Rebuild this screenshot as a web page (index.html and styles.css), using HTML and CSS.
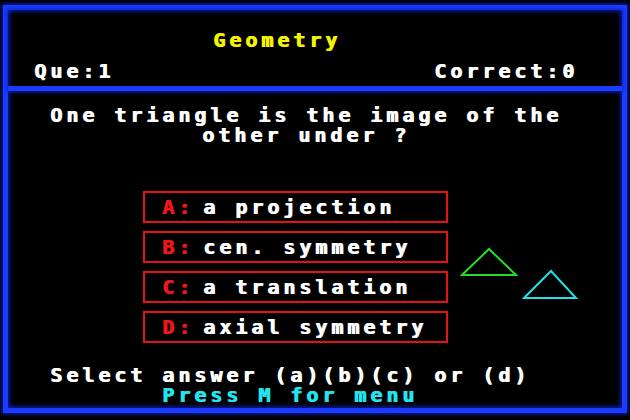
FILE: index.html
```html
<!DOCTYPE html>
<html lang="en">
<head>
  <meta charset="UTF-8" />
  <title>Geometry Quiz</title>
  <link rel="stylesheet" href="styles.css">
</head>
<body>
  <div class="screen">
    <div class="header">
      <div class="title">Geometry</div>
      <div class="score">
        <span>Que:1</span>
        <span>Correct:0</span>
      </div>
    </div>

    <div class="main">
      <div class="question">One triangle is the image of the<br>other under ?</div>

      <div class="play">
        <ul class="answers">
          <li><span class="key">A:</span>a projection</li>
          <li><span class="key">B:</span>cen. symmetry</li>
          <li><span class="key">C:</span>a translation</li>
          <li><span class="key">D:</span>axial symmetry</li>
        </ul>

        <svg class="shapes" width="120" height="56" viewBox="0 0 120 56">
          <polygon points="2,29 29,3 56,29" fill="none" stroke="#22e022" stroke-width="2" />
          <polygon points="64,52 91,25 116,52" fill="none" stroke="#22e0e8" stroke-width="2" />
        </svg>
      </div>

      <div class="prompt">
        Select answer (a)(b)(c) or (d)<br>
        <span class="menu">Press M for menu</span>
      </div>
    </div>
  </div>
</body>
</html>
```

FILE: styles.css
```css
html, body {
  margin: 0;
  background: #000;
}
body {
  width: 630px;
  height: 420px;
  overflow: hidden;
  font-family: 'DejaVu Sans Mono', 'Liberation Mono', monospace;
  font-weight: bold;
  font-size: 20px;
  line-height: 20px;
  letter-spacing: 3.96px;
  color: #fff;
  text-shadow: 1px 0 0 currentColor;
}
.screen {
  margin: 5px 3px 0 3px;
  height: 398px;
  border: 5px solid #1a3cff;
  box-shadow: 0 0 4px 1px #0822c8, inset 0 0 5px 1px #0822c8;
}
.header {
  height: 56px;
  padding-top: 20px;
  border-bottom: 5px solid #1a3cff;
  box-shadow: 0 0 4px 1px #0822c8;
}
.title {
  padding-left: 205px;
  color: #f4f400;
}
.score {
  display: flex;
  justify-content: space-between;
  margin-top: 11px;
  padding: 0 44px 0 26px;
}
.main {
  padding-top: 14px;
}
.question {
  text-align: center;
  padding-right: 18px;
}
.play {
  display: flex;
  margin-top: 46px;
}
.answers {
  list-style: none;
  margin: 0 0 0 135px;
  padding: 0;
  display: flex;
  flex-direction: column;
  gap: 8px;
  width: 305px;
}
.answers li {
  height: 28px;
  line-height: 28px;
  padding-left: 17px;
  border: 2px solid #e41414;
  white-space: nowrap;
}
.key {
  color: #ec1818;
  margin-right: 9px;
}
.shapes {
  display: block;
  margin: 55px 0 0 12px;
}
.prompt {
  margin-top: 22px;
  text-align: center;
  padding-right: 50px;
}
.menu {
  color: #22e4ec;
}
```
